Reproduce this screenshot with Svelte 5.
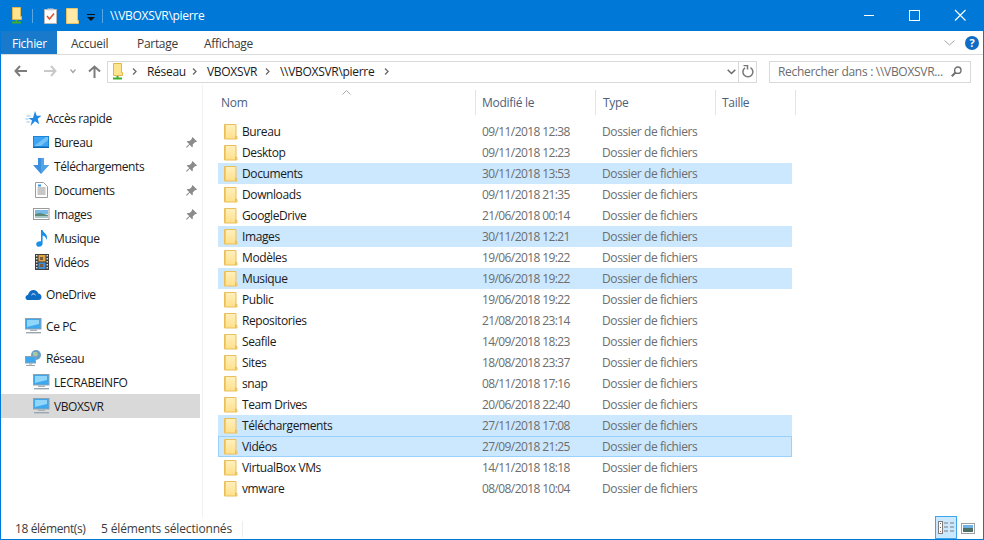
<script>
  const pinned = [
    { name: 'Bureau', icon: 'desktop', pin: true },
    { name: 'Téléchargements', icon: 'download', pin: true },
    { name: 'Documents', icon: 'doc', pin: true },
    { name: 'Images', icon: 'image', pin: true },
    { name: 'Musique', icon: 'music', pin: false },
    { name: 'Vidéos', icon: 'video', pin: false }
  ];
  const files = [
    ['Bureau', '09/11/2018 12:38', 0],
    ['Desktop', '09/11/2018 12:23', 0],
    ['Documents', '30/11/2018 13:53', 1],
    ['Downloads', '09/11/2018 21:35', 0],
    ['GoogleDrive', '21/06/2018 00:14', 0],
    ['Images', '30/11/2018 12:21', 1],
    ['Modèles', '19/06/2018 19:22', 0],
    ['Musique', '19/06/2018 19:22', 1],
    ['Public', '19/06/2018 19:22', 0],
    ['Repositories', '21/08/2018 23:14', 0],
    ['Seafile', '14/09/2018 18:23', 0],
    ['Sites', '18/08/2018 23:37', 0],
    ['snap', '08/11/2018 17:16', 0],
    ['Team Drives', '20/06/2018 22:40', 0],
    ['Téléchargements', '27/11/2018 17:08', 1],
    ['Vidéos', '27/09/2018 21:25', 2],
    ['VirtualBox VMs', '14/11/2018 18:18', 0],
    ['vmware', '08/08/2018 10:04', 0]
  ];
</script>

{#snippet folder()}
  <svg class="ficon" width="14" height="16" viewBox="0 0 14 16">
    <defs>
      <linearGradient id="fg" x1="0" y1="0" x2="0" y2="1">
        <stop offset="0" stop-color="#fff0bd"/>
        <stop offset="1" stop-color="#ffe08a"/>
      </linearGradient>
    </defs>
    <path d="M.5.5h11.500v12h1v2.500H.5z" fill="url(#fg)" stroke="#e9bf5b"/>
    <path d="M1.500 1v14" stroke="#f0cc70"/>
    <path d="M11.500 11.500v3.500" stroke="#e9bf5b"/>
  </svg>
{/snippet}

{#snippet netfolder()}
  <svg width="12" height="17" viewBox="0 0 12 17">
    <path d="M1.500.5h8v9h1v3h-9z" fill="#ffe48f" stroke="#e3b64d"/>
    <path d="M5.500 13v2M1 15.500h9" stroke="#3fae2a" stroke-width="2"/>
  </svg>
{/snippet}

{#snippet monitor()}
  <svg width="17" height="16" viewBox="0 0 17 16">
    <rect x=".5" y=".5" width="15.500" height="10.500" fill="#3ea8ee" stroke="#8da2b0"/>
    <path d="M2 2h12v4L2 9z" fill="#8fd6fa"/>
    <path d="M5 11.500h7v1.500H5z" fill="#a9b3ba"/>
    <path d="M1 14h15v1.400H1z" fill="#99a6af"/>
  </svg>
{/snippet}

{#snippet navicon(kind)}
  {#if kind === 'desktop'}
    <svg width="17" height="13" viewBox="0 0 17 13">
      <rect width="16" height="12" fill="#1c86d6"/>
      <path d="M1 1h14v9H1z" fill="#3ea3f0"/>
      <path d="M1 10L13 1h2v3L8 10z" fill="#72c2f7"/>
      <path d="M0 11h16v1H0z" fill="#0e66ad"/>
    </svg>
  {:else if kind === 'download'}
    <svg width="17" height="16" viewBox="0 0 17 16">
      <path d="M5 0h6v7h5l-8 9-8-9h5z" fill="#3c8fdd"/>
      <path d="M8 0h3v7h5l-8 9z" fill="#5aa9ea" opacity=".7"/>
    </svg>
  {:else if kind === 'doc'}
    <svg width="13" height="16" viewBox="0 0 13 16">
      <path d="M.5.500h8l4 4v11H.5z" fill="#fff" stroke="#9b9b9b"/>
      <path d="M2.500 6h8M2.500 8h8M2.500 10h8M2.500 12h8" stroke="#8f8f8f"/>
      <path d="M3 2.500h3v2H3z" fill="#3d93dd"/>
    </svg>
  {:else if kind === 'image'}
    <svg width="17" height="12" viewBox="0 0 17 12">
      <rect x=".5" y=".5" width="15.500" height="11" fill="#fff" stroke="#9a9a9a"/>
      <path d="M2 2h13v4H2z" fill="#78b9e8"/>
      <path d="M2 6l5-1 8 2v3H2z" fill="#5d8a78"/>
      <path d="M2 8h13v2H2z" fill="#a9c6c9"/>
    </svg>
  {:else if kind === 'music'}
    <svg width="12" height="17" viewBox="0 0 12 17">
      <path d="M5 0h1.600c.4 3 4.400 3.400 4.400 7.500 0 1-.3 1.800-.8 2.500.2-2.500-1.500-4-3.600-4.500V13.500C6.600 15.500 4.800 16.800 3 16.800S.2 15.600.2 14.200C.2 12.400 2.300 11 5 11.300z" fill="#1a8fe8"/>
    </svg>
  {:else if kind === 'video'}
    <svg width="14" height="16" viewBox="0 0 14 16">
      <rect width="14" height="16" fill="#3f3f3f"/>
      <path d="M1 1h1.500v1.500H1zM1 4h1.500v1.500H1zM1 7h1.500v1.500H1zM1 10h1.500v1.500H1zM1 13h1.500v1.500H1zM11.500 1H13v1.500h-1.500zM11.500 4H13v1.500h-1.500zM11.500 7H13v1.500h-1.500zM11.500 10H13v1.500h-1.500zM11.500 13H13v1.500h-1.500z" fill="#dcdcdc"/>
      <rect x="3.500" y="1" width="7" height="6.500" fill="#e2a43c"/>
      <rect x="3.500" y="8.500" width="7" height="6.500" fill="#3f8fd8"/>
      <path d="M5 3h3v3H5zM5 10h3v3H5z" fill="#7a5a3a"/>
    </svg>
  {/if}
{/snippet}

{#snippet pin()}
  <svg class="pin" width="11" height="11" viewBox="0 0 11 11">
    <path d="M6.500 0l4.500 4.500-1 .8-.8-.3L6.700 7.400l.2 2-.9.800-2.300-2.500L.8 10.800 0 10l3.200-2.900L.8 4.800l.8-.9 2 .2L6 1.700l-.3-.8z" fill="#8b8b8b"/>
  </svg>
{/snippet}

{#snippet crumbsep()}
  <svg class="csep" width="5" height="7" viewBox="0 0 5 7"><path d="M1 .5l3 3-3 3" fill="none" stroke="#6a6a6a" stroke-width="1.300"/></svg>
{/snippet}

<div class="window">
  <header class="title">
    <span class="tb1">{@render netfolder()}</span>
    <i class="tsep s1"></i>
    <svg class="tb2" width="13" height="16" viewBox="0 0 13 16">
      <path d="M.5 1.500h12v14H.5z" fill="#fff" stroke="#b9b9b9"/>
      <path d="M3.500.5h6v2h-6z" fill="#cfcfcf"/>
      <path d="M3 8l2.500 3L10 5.500" fill="none" stroke="#d9532c" stroke-width="1.500"/>
    </svg>
    <svg class="tb3" width="13" height="16" viewBox="0 0 13 16">
      <path d="M.5.500h11v12h1v3H.5z" fill="#ffe9a6" stroke="#eac165"/>
    </svg>
    <svg class="tb4" width="8" height="7" viewBox="0 0 8 7">
      <path d="M0 0h8v1H0zM0 3h8L4 7z" fill="#111"/>
    </svg>
    <i class="tsep s2"></i>
    <span class="ttext">\\VBOXSVR\pierre</span>
    <div class="controls">
      <svg width="46" height="31" viewBox="0 0 46 31"><path d="M18 15.500h10" stroke="#fff"/></svg>
      <svg width="46" height="31" viewBox="0 0 46 31"><rect x="17.500" y="10.500" width="10" height="10" fill="none" stroke="#fff"/></svg>
      <svg width="46" height="31" viewBox="0 0 46 31"><path d="M17 10l10.500 10.500M27.500 10L17 20.500" stroke="#fff" stroke-width="1.100"/></svg>
    </div>
  </header>

  <nav class="tabs">
    <span class="tab file">Fichier</span>
    <span class="tab t1">Accueil</span>
    <span class="tab t2">Partage</span>
    <span class="tab t3">Affichage</span>
    <svg class="collapse" width="11" height="6" viewBox="0 0 11 6"><path d="M.5.500l5 4.500 5-4.500" fill="none" stroke="#a6a6a6"/></svg>
    <span class="help">?</span>
  </nav>

  <div class="addr">
    <svg class="nb" width="13" height="12" viewBox="0 0 13 12"><path d="M6 1L1.500 6 6 11M1.500 6H13" fill="none" stroke="#7c7c7c" stroke-width="2"/></svg>
    <svg class="nb fwd" width="13" height="12" viewBox="0 0 13 12"><path d="M7 1l4.500 5L7 11M11.500 6H0" fill="none" stroke="#c9c9c9" stroke-width="2"/></svg>
    <svg class="nb dn" width="6" height="5" viewBox="0 0 6 5"><path d="M.5.500L3 3.500 5.500.500" fill="none" stroke="#a0a0a0" stroke-width="1.200"/></svg>
    <svg class="nb up" width="13" height="13" viewBox="0 0 13 13"><path d="M1 6.500l5.500-5 5.500 5M6.500 1.500V13" fill="none" stroke="#7c7c7c" stroke-width="2"/></svg>
    <div class="path">
      <span class="picon">{@render netfolder()}</span>
      {@render crumbsep()}<span class="c c1">Réseau</span>
      {@render crumbsep()}<span class="c c2">VBOXSVR</span>
      {@render crumbsep()}<span class="c c3">\\VBOXSVR\pierre</span>
      {@render crumbsep()}
      <svg class="pdrop" width="9" height="6" viewBox="0 0 9 6"><path d="M.7.700L4.500 4.500 8.300.700" fill="none" stroke="#6a6a6a" stroke-width="1.500"/></svg>
      <span class="refresh">
        <svg width="14" height="14" viewBox="0 0 14 14"><path d="M9.500 2.600A5 5 0 1 1 4 2.800" fill="none" stroke="#787878" stroke-width="1.500"/><path d="M2.500 .5h4v4" fill="none" stroke="#787878" stroke-width="1.500"/></svg>
      </span>
    </div>
    <div class="search">
      <span>Rechercher dans : \\VBOXSVR...</span>
      <svg width="11" height="11" viewBox="0 0 11 11"><circle cx="6.800" cy="4.200" r="3.200" fill="none" stroke="#6f6f6f" stroke-width="1.400"/><path d="M4.500 6.500L.8 10.200" stroke="#6f6f6f" stroke-width="2"/></svg>
    </div>
  </div>

  <main class="main">
    <aside class="nav">
      <div class="group">
        <div class="ni top">
          <svg class="ni-icon" width="16" height="15" viewBox="0 0 16 15"><path d="M9.500 0l1.700 4.800H16l-3.800 3 1.500 5.500-4.200-3L5 15l1.500-5.500L3 7h4.500z" fill="#2089e6"/><path d="M1 5h4M0 8h3M1 11h3" stroke="#8cc4f0"/></svg>
          <span class="lbl">Accès rapide</span>
        </div>
        {#each pinned as p}
          <div class="ni sub">
            <span class="ni-icon">{@render navicon(p.icon)}</span>
            <span class="grow lbl">{p.name}</span>
            {#if p.pin}{@render pin()}{/if}
          </div>
        {/each}
      </div>
      <div class="group">
        <div class="ni top">
          <svg class="ni-icon" width="16" height="11" viewBox="0 0 16 11"><path d="M2.800 11C1 11 0 9.800 0 8.400 0 7 1 6 2.400 5.900 3.200 3 5.500 1 8 1c2.400 0 4 1.300 4.800 3.500C14.600 4.700 16 6 16 8c0 1.800-1.300 3-3 3z" fill="#0f6cc4"/><path d="M6 6c1-1.500 3-1.500 4 0" stroke="#fff" fill="none"/></svg>
          <span class="lbl">OneDrive</span>
        </div>
      </div>
      <div class="group">
        <div class="ni top"><span class="ni-icon">{@render monitor()}</span><span class="lbl">Ce PC</span></div>
      </div>
      <div class="group">
        <div class="ni top">
          <svg class="ni-icon" width="17" height="16" viewBox="0 0 17 16">
            <circle cx="11" cy="5" r="5" fill="#6c9fc4"/><path d="M8 2h4l1 3-3 2-2-2z" fill="#a9c7a0"/>
            <rect x=".5" y="6.500" width="10" height="6.500" fill="#3ea8ee" stroke="#8da2b0"/>
            <path d="M4 13.500h3v1H4zM1 15h9v1H1z" fill="#9aa7b0"/>
          </svg>
          <span class="lbl">Réseau</span>
        </div>
        <div class="ni sub"><span class="ni-icon">{@render monitor()}</span><span class="lbl">LECRABEINFO</span></div>
        <div class="ni sub active"><span class="ni-icon">{@render monitor()}</span><span class="lbl">VBOXSVR</span></div>
      </div>
    </aside>

    <section class="list">
      <svg class="sort" width="9" height="5" viewBox="0 0 9 5"><path d="M.5 4.500l4-4 4 4" fill="none" stroke="#a9a9a9"/></svg>
      <div class="heads">
        <span class="h hn">Nom</span>
        <span class="h hd">Modifié le</span>
        <span class="h ht">Type</span>
        <span class="h hs">Taille</span>
      </div>
      <div class="rows">
        {#each files as f}
          <div class="row" class:sel={f[2] > 0} class:focus={f[2] === 2}>
            {@render folder()}
            <span class="fname">{f[0]}</span>
            <span class="fdate">{f[1]}</span>
            <span class="ftype">Dossier de fichiers</span>
          </div>
        {/each}
      </div>
    </section>
  </main>

  <footer class="status">
    <span class="st1">18 élément(s)</span>
    <span class="st2">5 éléments sélectionnés</span>
    <div class="views">
      <span class="vbtn on">
        <svg width="17" height="13" viewBox="0 0 17 13">
          <rect x=".5" y=".5" width="4" height="12" fill="#fff" stroke="#7c7c7c"/>
          <path d="M2 2h1v1H2zM2 6h1v1H2z" fill="#666"/><path d="M2 10h1v1H2z" fill="#c0563a"/>
          <path d="M6 2h4M12 2h4M6 6h4M12 6h4M6 10h4M12 10h4" stroke="#7a7a7a"/>
        </svg>
      </span>
      <span class="vbtn">
        <svg width="14" height="11" viewBox="0 0 14 11">
          <rect x=".5" y=".5" width="13" height="10" fill="#fff" stroke="#a0a0a0"/>
          <path d="M2 2h10v3H2z" fill="#6fb1e4"/><path d="M2 5h10v4H2z" fill="#4e6f66"/>
        </svg>
      </span>
    </div>
  </footer>
</div>

<style>
  :global(body) { margin: 0; background: #fff; }
  .window {
    box-sizing: border-box; width: 984px; height: 540px;
    display: flex; flex-direction: column;
    border: 1px solid #0078d7; border-top: 0;
    font: 12px/16px "Open Sans", sans-serif; letter-spacing: -.4px; color: #1a1a1a;
    overflow: hidden; background: #fff;
  }
  svg { display: block; flex: none; }
  .title { height: 31px; flex: none; background: #0078d7; display: flex; align-items: center; color: #fff; position: relative; letter-spacing: -.3px; }
  .tb1 { margin-left: 10px; }
  .tsep { width: 1px; height: 14px; background: #5aa7e6; }
  .s1 { margin-left: 9px; }
  .tb2 { margin-left: 11px; }
  .tb3 { margin-left: 9px; }
  .tb4 { margin-left: 8px; margin-top: 3px; }
  .s2 { margin-left: 7px; }
  .ttext { margin-left: 7px; }
  .controls { margin-left: auto; display: flex; margin-right: -1px; }

  .tabs { height: 23px; flex: none; display: flex; align-items: center; border-bottom: 1px solid #dadbdc; letter-spacing: -.3px; }
  .tab { display: block; color: #3b3b3b; margin-top: 2px; }
  .file { background: #1979ca; color: #fff; width: 56px; height: 23px; line-height: 23px; padding-left: 11px; box-sizing: border-box; margin-top: 0; padding-top: 1px; }
  .t1 { margin-left: 14px; width: 66px; }
  .t2 { width: 67px; }
  .t3 { width: 60px; }
  .collapse { margin-left: auto; margin-right: 10px; }
  .help { width: 14px; height: 14px; border-radius: 50%; background: #0f6cc4; color: #fff; font: bold 11px/14px "Open Sans", sans-serif; text-align: center; margin-right: 4px; }

  .addr { height: 30px; flex: none; display: flex; align-items: center; position: relative; }
  .nb { margin-top: 2px; }
  .nb:first-child { margin-left: 13px; }
  .fwd { margin-left: 17px; }
  .dn { margin-left: 13px; }
  .up { margin-left: 12px; }
  .path {
    box-sizing: border-box; width: 650px; height: 22px; margin-left: 6px; margin-top: 3px;
    border: 1px solid #d9d9d9; display: flex; align-items: center; color: #1a1a1a; letter-spacing: -.3px;
  }
  .picon { margin-left: 4px; width: 12px; height: 17px; margin-right: 8px; }
  .csep { margin-right: 10px; }
  .c { display: block; }
  .c1 { width: 45px; }
  .c2 { width: 58px; }
  .c3 { width: 104px; }
  .pdrop { margin-left: auto; margin-right: 2px; }
  .refresh { width: 17px; height: 20px; border-left: 1px solid #d9d9d9; display: flex; align-items: center; justify-content: center; }
  .search {
    box-sizing: border-box; width: 202px; height: 22px; margin-left: 12px; margin-top: 3px;
    border: 1px solid #d9d9d9; display: flex; align-items: center; justify-content: space-between;
    padding: 0 8px; color: #6d6d6d; letter-spacing: -.3px;
  }

  .main { flex: 1; display: flex; min-height: 0; }
  .nav { width: 202px; flex: none; padding-top: 21px; border-right: 1px solid #f0f0f0; box-sizing: border-box; }
  .group { margin-bottom: 8px; }
  .ni { height: 24px; display: flex; align-items: center; width: 199px; box-sizing: border-box; }
  .top { padding-left: 24px; }
  .sub { padding-left: 32px; padding-right: 3px; }
  .ni-icon { width: 17px; flex: none; margin-right: 4px; display: flex; justify-content: center; }
  .lbl { margin-top: 1px; }
  .grow { flex: 1; }
  .active { background: #d9d9d9; }

  .list { flex: 1; padding-left: 15px; position: relative; }
  .sort { position: absolute; left: 139px; top: 5px; }
  .heads { height: 25px; margin-top: 5px; display: flex; letter-spacing: -.3px; }
  .h { box-sizing: border-box; display: block; border-right: 1px solid #e5e5e5; line-height: 26px; color: #4c607a; }
  .hn { width: 258px; padding-left: 3px; }
  .hd { width: 120px; padding-left: 6px; }
  .ht { width: 120px; padding-left: 7px; }
  .hs { width: 80px; padding-left: 6px; }
  .rows { margin-top: 6px; width: 574px; }
  .row { box-sizing: border-box; height: 21px; display: flex; align-items: center; padding-left: 6px; }
  .ficon { margin-right: 4px; }
  .sel { background: #cce8ff; }
  .focus { outline: 1px solid #99d1ff; outline-offset: -1px; }
  .fname { width: 240px; }
  .fdate { width: 120px; color: #6d6d6d; letter-spacing: -.6px; }
  .ftype { color: #6d6d6d; }

  .status { height: 22px; flex: none; display: flex; align-items: center; position: relative; color: #3b3b3b; letter-spacing: -.15px; }
  .st1 { margin-left: 14px; width: 86px; margin-top: 2px; letter-spacing: -.4px; }
  .st2 { width: 141px; border-right: 1px solid #ececec; margin-top: 2px; }
  .views { margin-left: auto; display: flex; align-items: center; margin-right: 8px; gap: 3px; }
  .vbtn { box-sizing: border-box; width: 22px; height: 22px; display: flex; align-items: center; justify-content: center; }
  .vbtn.on { background: #cce8ff; border: 1px solid #3ca6e8; height: 23px; margin-top: -1px; }
  .vbtn:last-child { width: 15px; }
</style>
